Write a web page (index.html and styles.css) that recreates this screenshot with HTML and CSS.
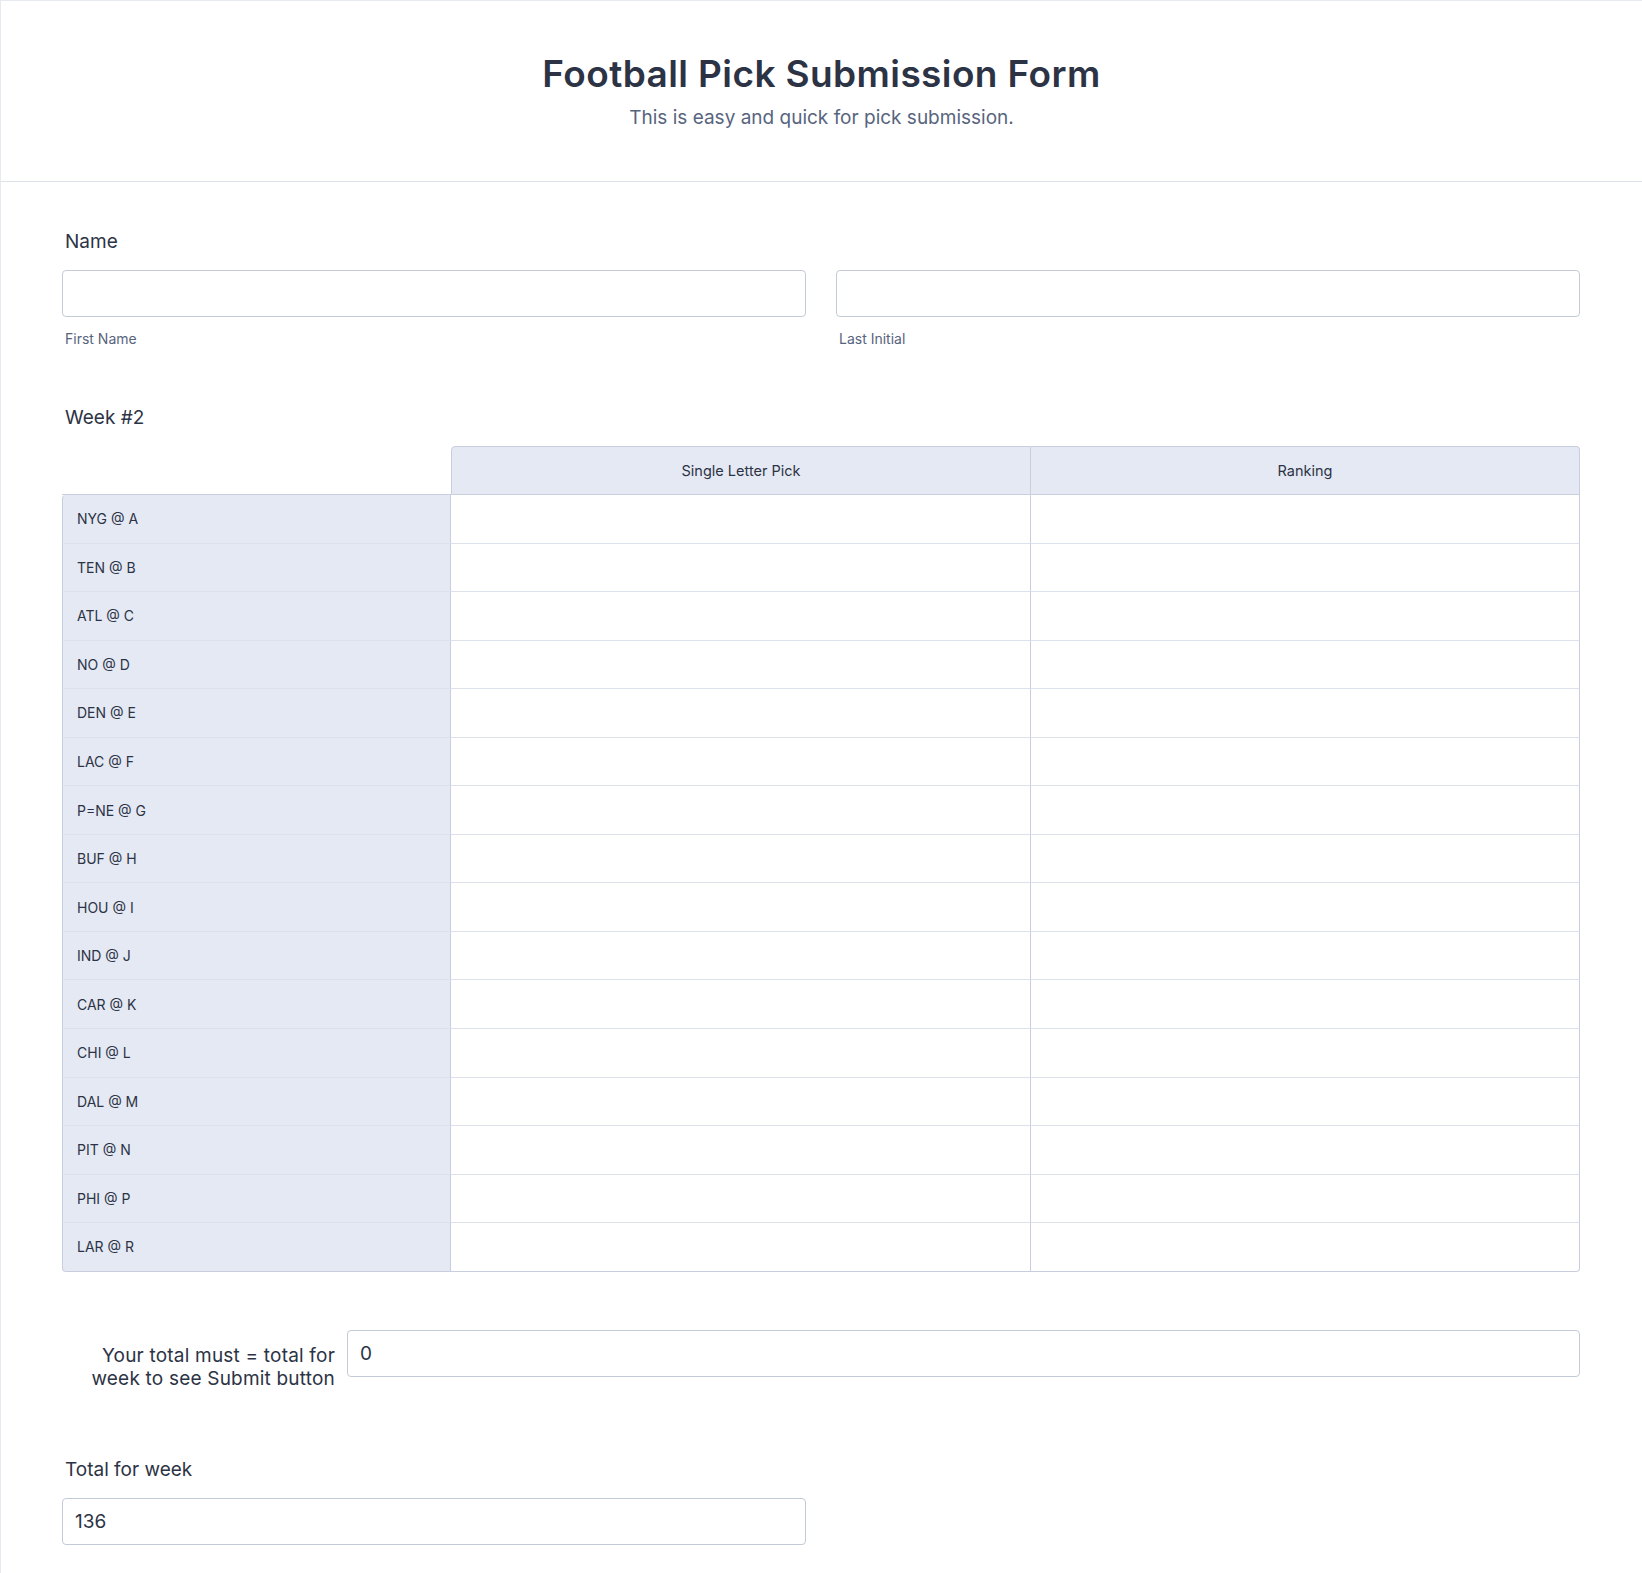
FILE: index.html
```html
<!DOCTYPE html>
<html>
<head>
    <meta charset="utf-8">
    <title>Football Pick Submission Form</title>
    <link rel="stylesheet" href="styles.css">
</head>
<body>
<div class="form">
    <div class="form-header">
        <h1 class="form-title">Football Pick Submission Form</h1>
        <p class="form-subtitle">This is easy and quick for pick submission.</p>
    </div>

    <div class="form-body">
        <div class="field">
            <label class="field-label">Name</label>
            <div class="name-row">
                <div class="name-part">
                    <input type="text" class="text-input">
                    <span class="sublabel">First Name</span>
                </div>
                <div class="name-part">
                    <input type="text" class="text-input">
                    <span class="sublabel">Last Initial</span>
                </div>
            </div>
        </div>

        <div class="field field-table">
            <label class="field-label">Week #2</label>
            <table class="matrix">
                <colgroup>
                    <col class="col-game">
                    <col class="col-pick">
                    <col class="col-rank">
                </colgroup>
                <thead>
                    <tr>
                        <th class="corner"></th>
                        <th class="head head-pick">Single Letter Pick</th>
                        <th class="head head-rank">Ranking</th>
                    </tr>
                </thead>
                <tbody>
                    <tr><td class="game">NYG @ A</td><td class="cell"></td><td class="cell"></td></tr>
                    <tr><td class="game">TEN @ B</td><td class="cell"></td><td class="cell"></td></tr>
                    <tr><td class="game">ATL @ C</td><td class="cell"></td><td class="cell"></td></tr>
                    <tr><td class="game">NO @ D</td><td class="cell"></td><td class="cell"></td></tr>
                    <tr><td class="game">DEN @ E</td><td class="cell"></td><td class="cell"></td></tr>
                    <tr><td class="game">LAC @ F</td><td class="cell"></td><td class="cell"></td></tr>
                    <tr><td class="game">P=NE @ G</td><td class="cell"></td><td class="cell"></td></tr>
                    <tr><td class="game">BUF @ H</td><td class="cell"></td><td class="cell"></td></tr>
                    <tr><td class="game">HOU @ I</td><td class="cell"></td><td class="cell"></td></tr>
                    <tr><td class="game">IND @ J</td><td class="cell"></td><td class="cell"></td></tr>
                    <tr><td class="game">CAR @ K</td><td class="cell"></td><td class="cell"></td></tr>
                    <tr><td class="game">CHI @ L</td><td class="cell"></td><td class="cell"></td></tr>
                    <tr><td class="game">DAL @ M</td><td class="cell"></td><td class="cell"></td></tr>
                    <tr><td class="game">PIT @ N</td><td class="cell"></td><td class="cell"></td></tr>
                    <tr><td class="game">PHI @ P</td><td class="cell"></td><td class="cell"></td></tr>
                    <tr><td class="game">LAR @ R</td><td class="cell"></td><td class="cell"></td></tr>
                </tbody>
            </table>
        </div>

        <div class="field field-inline">
            <label class="inline-label">Your total must = total for week to see Submit button</label>
            <input type="text" class="text-input" value="0">
        </div>

        <div class="field field-total">
            <label class="field-label">Total for week</label>
            <input type="text" class="text-input half-input" value="136">
        </div>
    </div>
</div>
</body>
</html>
```

FILE: styles.css
```css
body {
    margin: 0;
    background: #ffffff;
    font-family: Inter, "Noto Sans", "Liberation Sans", sans-serif;
    color: #2c3345;
}

.form {
    border-top: 1px solid #e6e9ef;
    border-left: 1px solid #e6e9ef;
    min-height: 1572px;
}

/* header */
.form-header {
    padding: 52px 0 51px;
    border-bottom: 1px solid #dde1ea;
    text-align: center;
}
.form-title {
    margin: 0;
    font-size: 37px;
    line-height: 42px;
    letter-spacing: 0.4px;
    font-weight: 600;
    color: #2c3345;
}
.form-subtitle {
    margin: 11px 0 0;
    font-size: 19px;
    line-height: 24px;
    color: #57647e;
}

/* body */
.form-body {
    padding: 48px 62px 0 61px;
}
.field {
    margin-bottom: 58px;
}
.field-label {
    display: block;
    padding-left: 3px;
    font-size: 19px;
    line-height: 24px;
    font-weight: 400;
    color: #2c3345;
    margin-bottom: 16px;
}
.text-input {
    display: block;
    box-sizing: border-box;
    width: 100%;
    height: 47px;
    margin: 0;
    padding: 0 12px;
    border: 1px solid #c3cad8;
    border-radius: 4px;
    background: #ffffff;
    font-family: inherit;
    font-size: 19px;
    color: #2c3345;
    outline: none;
}
.half-input {
    width: calc((100% - 30px) / 2);
}

.name-row {
    display: grid;
    grid-template-columns: 1fr 1fr;
    column-gap: 30px;
}
.sublabel {
    display: block;
    margin-top: 13px;
    padding-left: 3px;
    font-size: 14px;
    line-height: 18px;
    color: #57647e;
}

/* matrix table */
.matrix {
    width: 100%;
    border-collapse: separate;
    border-spacing: 0;
    table-layout: fixed;
    font-size: 14px;
    color: #2c3345;
}
.col-game { width: 389px; }
.col-pick { width: 580px; }
.matrix th,
.matrix td {
    padding: 0;
}
.matrix thead tr { height: 49px; }
.matrix tbody tr { height: 48.56px; }

.corner {
    border-bottom: 1px solid #c8cedd;
}
.head {
    background: #e5e9f4;
    font-size: 14.5px;
    font-weight: 400;
    text-align: center;
    border-top: 1px solid #c8cedd;
    border-right: 1px solid #c8cedd;
    border-bottom: 1px solid #c8cedd;
}
.head-pick {
    border-left: 1px solid #c8cedd;
    border-top-left-radius: 4px;
}
.head-rank {
    border-top-right-radius: 4px;
}
.game {
    background: #e5e9f4;
    padding-left: 14px !important;
    border-left: 1px solid #c8cedd;
    border-right: 1px solid #c8cedd;
    border-bottom: 1px solid #dde1ec;
}
.matrix tbody tr:first-child .game {
    border-top-left-radius: 4px;
}
.cell {
    border-right: 1px solid #c8cedd;
    border-bottom: 1px solid #dde1ec;
}
.matrix tbody tr:last-child td {
    border-bottom-color: #c8cedd;
}
.matrix tbody tr:last-child .game {
    border-bottom-left-radius: 4px;
}
.matrix tbody tr:last-child td:last-child {
    border-bottom-right-radius: 4px;
}

/* inline label field */
.field-inline {
    display: flex;
    align-items: flex-start;
    gap: 12px;
    margin-bottom: 68px;
}
.inline-label {
    flex: 0 0 273px;
    box-sizing: border-box;
    padding: 14px 0 0 10px;
    text-align: right;
    font-size: 19px;
    line-height: 23px;
    letter-spacing: 0.2px;
    font-weight: 400;
    color: #2c3345;
}
.field-inline .text-input {
    flex: 1;
}
```
